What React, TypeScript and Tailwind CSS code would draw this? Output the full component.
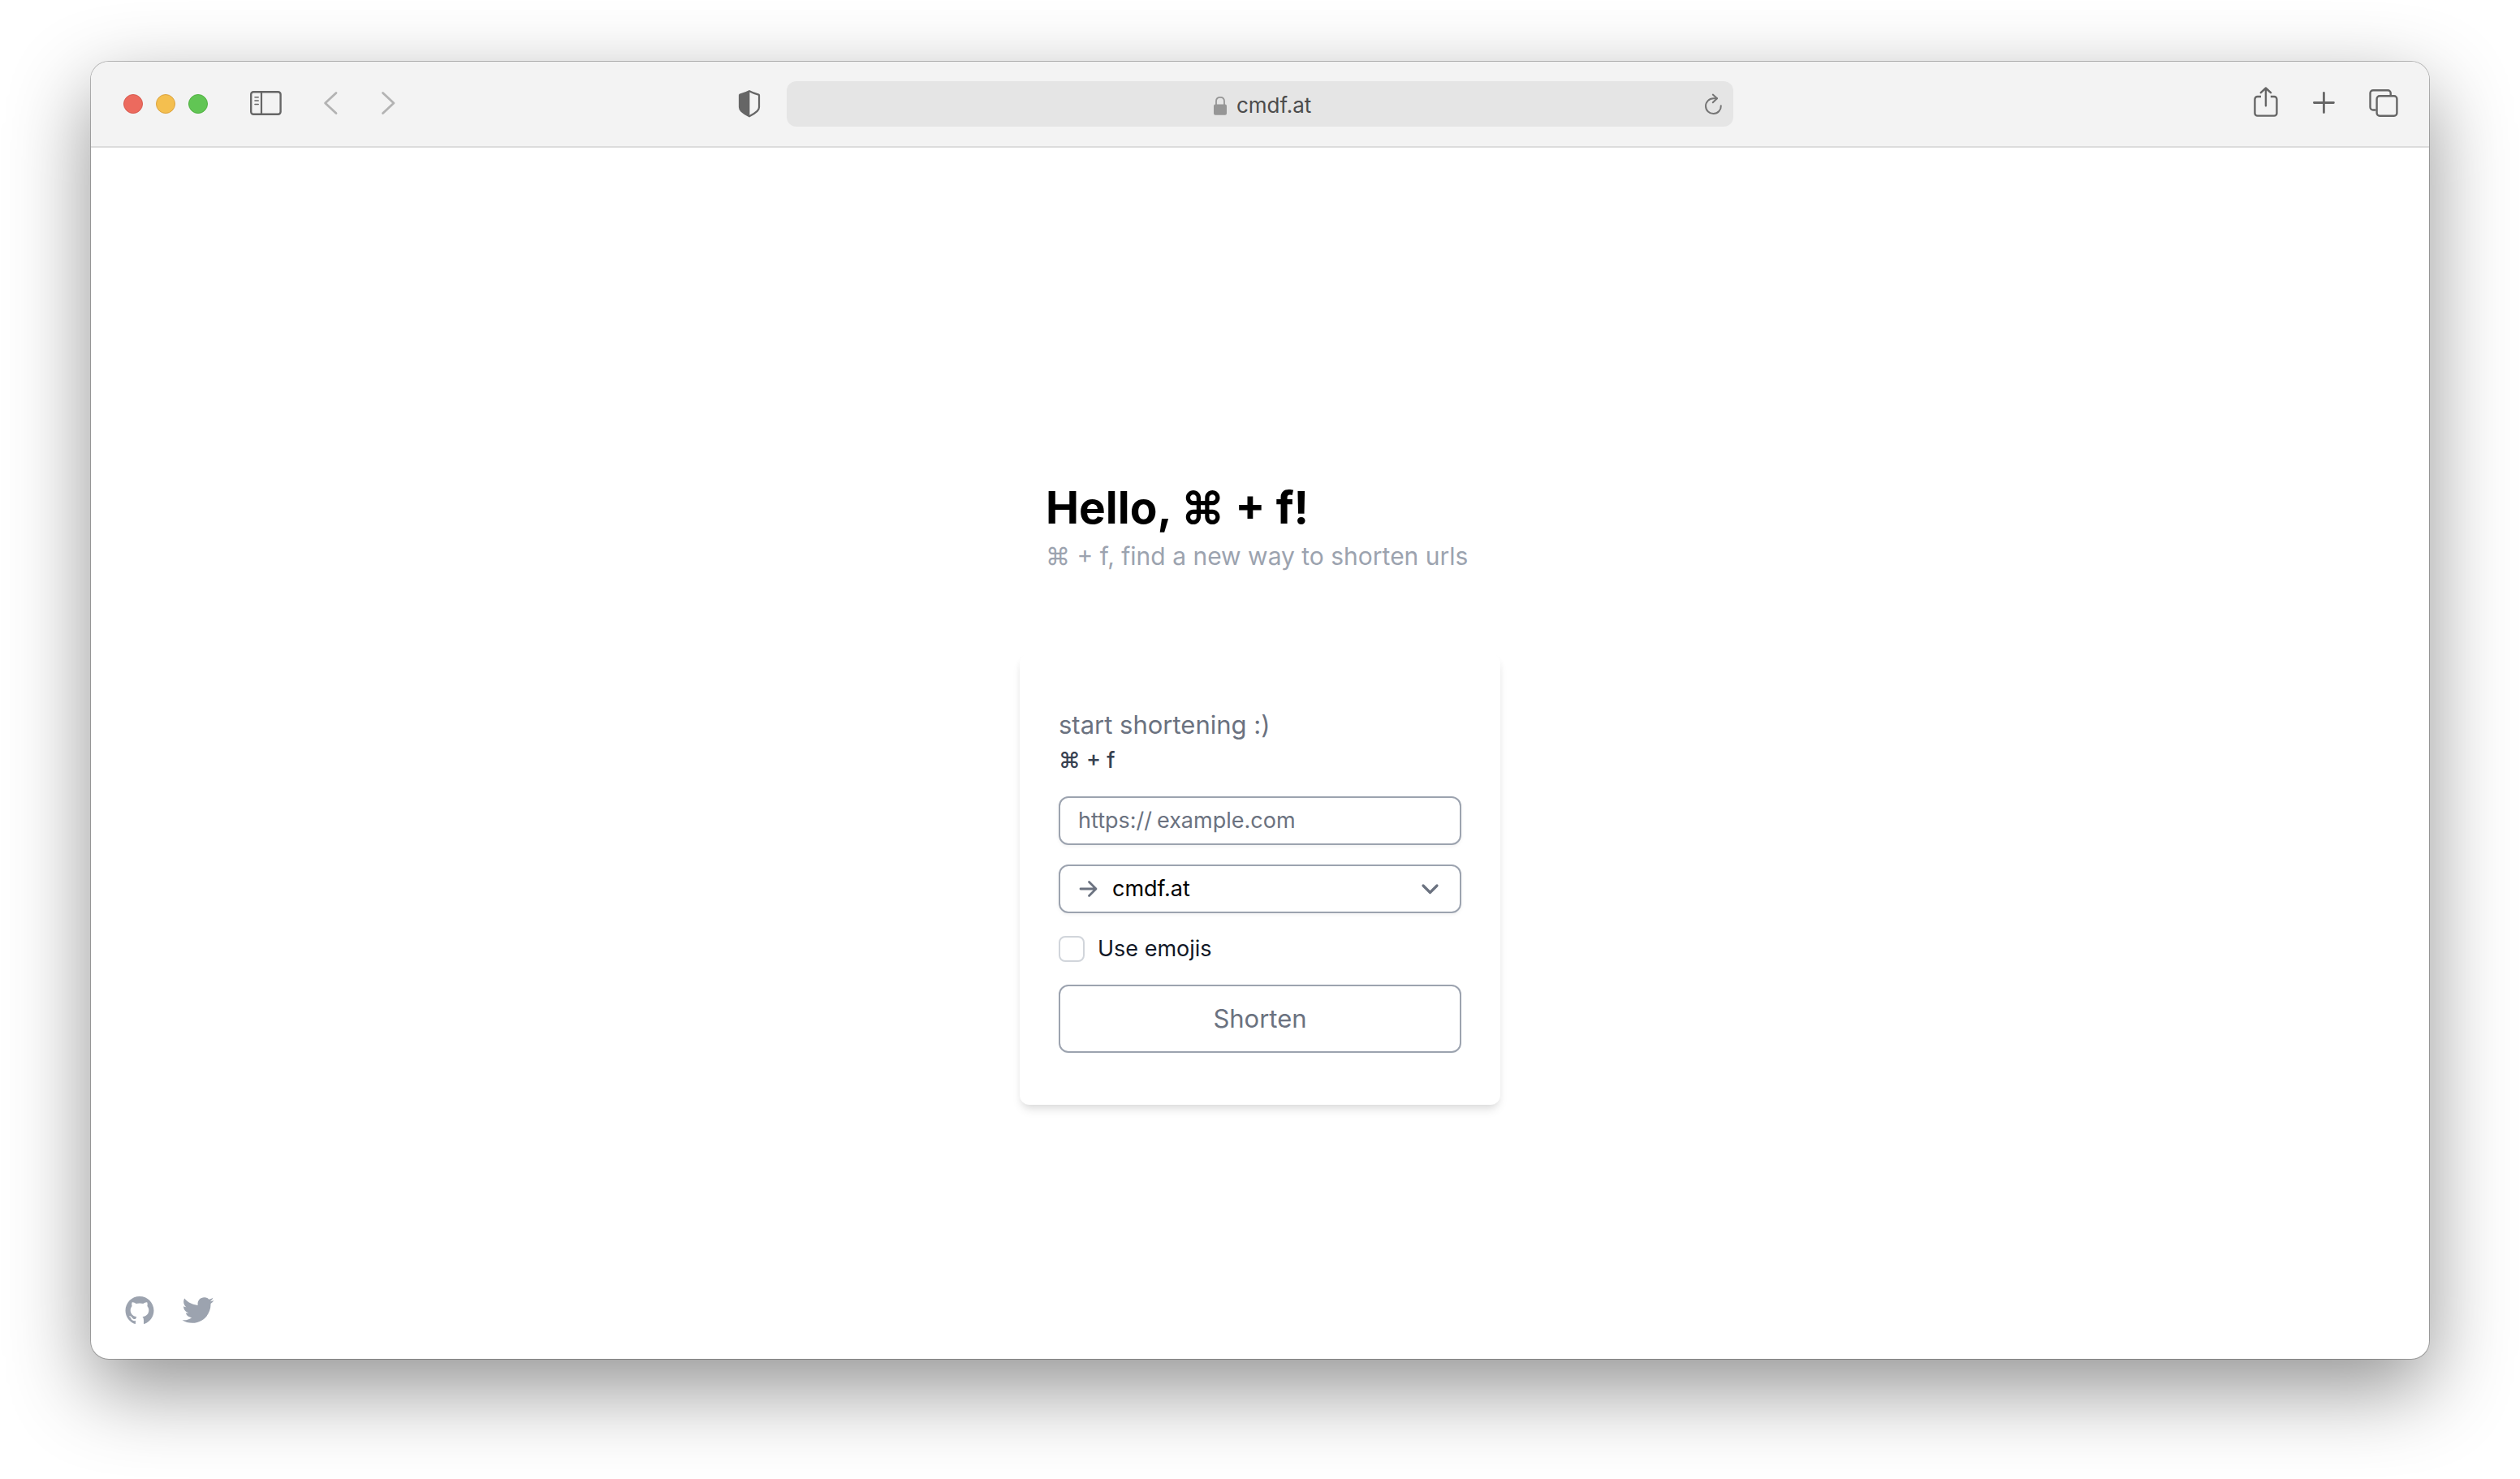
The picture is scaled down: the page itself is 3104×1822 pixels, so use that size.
import type { ReactNode } from "react";
import { AiFillGithub, AiOutlineTwitter } from "react-icons/ai";

function ToolButton({ label, children }: { label: string; children: ReactNode }) {
  return (
    <button type="button" aria-label={label} className="shrink-0">
      {children}
    </button>
  );
}

function SidebarIcon() {
  return (
    <svg className="h-[42px] w-10" viewBox="0 0 40 42" fill="none" stroke="#666666" strokeLinecap="round">
      <rect x="1.2" y="6.2" width="36.4" height="27.6" rx="3" strokeWidth="2.4" />
      <path d="M14 6v28" strokeWidth="2.2" />
      <path d="M6 12.7h4.2M6 17h4.2M6 21.5h4.2" strokeWidth="1.6" />
    </svg>
  );
}

function ChevronIcon({ forward = false }: { forward?: boolean }) {
  return (
    <svg className="h-[42px] w-[18px] overflow-visible" viewBox="0 0 18 42" fill="none" stroke="#b3b3b3" strokeWidth="2.8" strokeLinecap="round" strokeLinejoin="round">
      <path d={forward ? "M1.6 7.4 15 20l-13.4 12.6" : "M14 7.4.6 20 14 32.6"} />
    </svg>
  );
}

function ShieldIcon() {
  return (
    <svg className="h-[42px] w-7" viewBox="0 0 28 42" fill="none">
      <path
        d="M14 5.2c4 2.2 8 3.4 11.4 4.4.4.2.6.5.6 1V25c0 2-.8 3.5-2.3 4.9C21.2 32.2 17.8 34.5 14 36.3 10.2 34.5 6.8 32.2 4.3 29.9 2.8 28.5 2 27 2 25V10.6c0-.5.2-.8.6-1C6 8.6 10 7.4 14 5.2z"
        stroke="#666666"
        strokeWidth="2.2"
      />
      <path d="M14.4 5v31.3C10 34.5 6.8 32.2 4.3 29.9 2.8 28.5 2 27 2 25V10.2C6 8.6 10 7.4 14.4 5z" fill="#666666" />
    </svg>
  );
}

function LockIcon() {
  return (
    <svg className="h-7 w-4 shrink-0" viewBox="0 0 16 28" fill="none">
      <rect x="0" y="12.4" width="16" height="13.4" rx="2" fill="#969696" />
      <path d="M3 13V8.5C3 5.5 5 3.8 8 3.8s5 1.7 5 4.7V13" stroke="#969696" strokeWidth="1.8" />
    </svg>
  );
}

function ReloadIcon() {
  return (
    <svg className="h-7 w-6" viewBox="0 0 24 28" fill="none" stroke="#757575" strokeWidth="2" strokeLinecap="round" strokeLinejoin="round">
      <path d="M20.8 16.2A9.4 9.4 0 1 1 11.4 7.3H16" />
      <path d="M10.8 2.6 16 7.3l-5.2 5" />
    </svg>
  );
}

function ShareIcon() {
  return (
    <svg className="h-[42px] w-[30px]" viewBox="0 0 30 42" fill="none" stroke="#666666" strokeWidth="2.4" strokeLinecap="round" strokeLinejoin="round">
      <path d="M9 12H4.6a3.2 3.2 0 0 0-3.2 3.2v17.2a3.2 3.2 0 0 0 3.2 3.2h20.6a3.2 3.2 0 0 0 3.2-3.2V15.2a3.2 3.2 0 0 0-3.2-3.2H20.8" strokeLinecap="butt" />
      <path d="M14.9 23.2V1.8M8.8 7.2l6.1-5.7L21 7.2" />
    </svg>
  );
}

function PlusIcon() {
  return (
    <svg className="h-[42px] w-7" viewBox="0 0 28 42" fill="none" stroke="#666666" strokeWidth="2.8" strokeLinecap="round">
      <path d="M2.4 19.5h24M14.4 7.5v24" />
    </svg>
  );
}

function TabsIcon() {
  return (
    <svg className="h-[42px] w-9" viewBox="0 0 36 42" fill="none" stroke="#666666" strokeWidth="2.4">
      <path d="M8.5 28.5H5A3.5 3.5 0 0 1 1.5 25V7.7A3.5 3.5 0 0 1 5 4.200h18.200a3.500 3.500 0 0 1 3.500 3.500v3.500" />
      <rect x="9.6" y="11.3" width="24.8" height="24.4" rx="3.5" />
    </svg>
  );
}

function Toolbar() {
  return (
    <header className="grid grid-cols-[1fr_40.5%_1fr] items-center border-b-2 border-[#dcdcdc] bg-[#f3f3f3] py-6">
      <div className="flex items-center pl-10">
        <div className="flex gap-4">
          <button type="button" aria-label="Close" className="size-6 rounded-full border border-[#d75a4f] bg-[#ec6a5e]" />
          <button type="button" aria-label="Minimize" className="size-6 rounded-full border border-[#dba33f] bg-[#f4bf4f]" />
          <button type="button" aria-label="Zoom" className="size-6 rounded-full border border-[#50b041] bg-[#61c554]" />
        </div>
        <nav aria-label="History" className="ml-[52px] flex flex-1 items-center gap-[52px]">
          <ToolButton label="Show sidebar"><SidebarIcon /></ToolButton>
          <ToolButton label="Back"><ChevronIcon /></ToolButton>
          <ToolButton label="Forward"><ChevronIcon forward /></ToolButton>
        </nav>
        <div className="flex pr-8">
          <ToolButton label="Privacy report"><ShieldIcon /></ToolButton>
        </div>
      </div>
      <div className="grid h-14 grid-cols-[1fr_auto_1fr] items-center rounded-xl bg-[#e5e5e5] pr-3 pl-6">
        <span />
        <div className="flex items-center gap-2.5 pt-1">
          <LockIcon />
          <input type="text" aria-label="Address" defaultValue="cmdf.at" className="h-10 w-25 bg-transparent px-0.5 text-[26px] leading-10 text-[#4c4c4c] outline-none" />
        </div>
        <div className="flex justify-end">
          <ToolButton label="Reload"><ReloadIcon /></ToolButton>
        </div>
      </div>
      <div className="flex items-center justify-end gap-[42px] pr-[38px]">
        <ToolButton label="Share"><ShareIcon /></ToolButton>
        <ToolButton label="New tab"><PlusIcon /></ToolButton>
        <ToolButton label="Show all tabs"><TabsIcon /></ToolButton>
      </div>
    </header>
  );
}

function ShortenForm() {
  return (
    <form
      onSubmit={(event) => event.preventDefault()}
      className="mt-24 rounded-xl bg-white px-12 py-16 shadow-[0_8px_12px_-2px_rgba(0,0,0,0.1),0_4px_8px_-2px_rgba(0,0,0,0.06)]"
    >
      <h2 className="text-[31px] leading-12 text-[#6b7280]">start shortening :)</h2>
      <label htmlFor="url" className="block text-[27px] leading-10 font-medium text-[#374151]">⌘ + f</label>
      <div className="mt-6 flex h-15 items-center gap-1.5 rounded-xl border-2 border-[#9ca3af] px-[22px] text-[27px] shadow-[0_2px_4px_rgba(0,0,0,0.05)]">
        <span className="text-[#6b7280]">https://</span>
        <input id="url" type="text" placeholder="example.com" className="min-w-0 flex-1 bg-transparent outline-none placeholder:text-[#6b7280]" />
      </div>
      <div className="mt-6 flex h-15 items-center gap-3 rounded-xl border-2 border-[#9ca3af] px-5 text-[27px] shadow-[0_2px_4px_rgba(0,0,0,0.05)]">
        <svg className="size-8 shrink-0" viewBox="0 0 32 32" fill="none" stroke="#6b7280" strokeWidth="2.8" strokeLinecap="round" strokeLinejoin="round" aria-hidden="true">
          <path d="M5 16h18M15.5 7.5 24 16l-8.5 8.5" />
        </svg>
        <select aria-label="Domain" className="min-w-0 flex-1 appearance-none bg-transparent text-black outline-none">
          <option>cmdf.at</option>
        </select>
        <svg className="size-8 shrink-0" viewBox="0 0 32 32" fill="none" stroke="#6b7280" strokeWidth="3.2" strokeLinecap="round" strokeLinejoin="round" aria-hidden="true">
          <path d="m7 12 8.5 8.5L24 12" />
        </svg>
      </div>
      <label className="mt-6 flex items-center gap-4 text-[27px] leading-10 text-[#111827]">
        <input type="checkbox" className="size-8 appearance-none rounded-lg border-2 border-[#d1d5db] bg-white checked:bg-gray-500" />
        Use emojis
      </label>
      <button type="submit" className="mt-6 h-[84px] w-full rounded-xl border-2 border-[#9ca3af] text-[31px] text-[#6b7280]">
        Shorten
      </button>
    </form>
  );
}

export default function App() {
  return (
    <div className="flex min-h-screen bg-white px-28 pt-19 pb-37 font-['Inter','Liberation_Sans',sans-serif]">
      <div className="flex flex-1 flex-col overflow-hidden rounded-[22px] bg-white shadow-[0_0_0_1px_rgba(0,0,0,0.25),0_36px_100px_rgba(0,0,0,0.43)]">
        <Toolbar />
        <div className="grid flex-1 grid-rows-[1fr_auto]">
          <main className="mx-auto flex w-[592px] flex-col justify-center pt-[178px]">
            <div className="px-8">
              <h1 className="text-[55px] leading-18 font-bold text-black">Hello, ⌘ + f!</h1>
              <p className="text-[30px] leading-12 whitespace-nowrap text-[#9ca3af]">⌘ + f, find a new way to shorten urls</p>
            </div>
            <ShortenForm />
          </main>
          <footer className="flex h-21 items-start gap-7 pl-10">
            <a href="#github" aria-label="GitHub" className="flex h-12 items-center">
              <AiFillGithub className="size-10 text-[#9ca3af]" />
            </a>
            <a href="#twitter" aria-label="Twitter" className="flex h-12 items-center">
              <AiOutlineTwitter className="size-12 text-[#9ca3af]" />
            </a>
          </footer>
        </div>
      </div>
    </div>
  );
}
